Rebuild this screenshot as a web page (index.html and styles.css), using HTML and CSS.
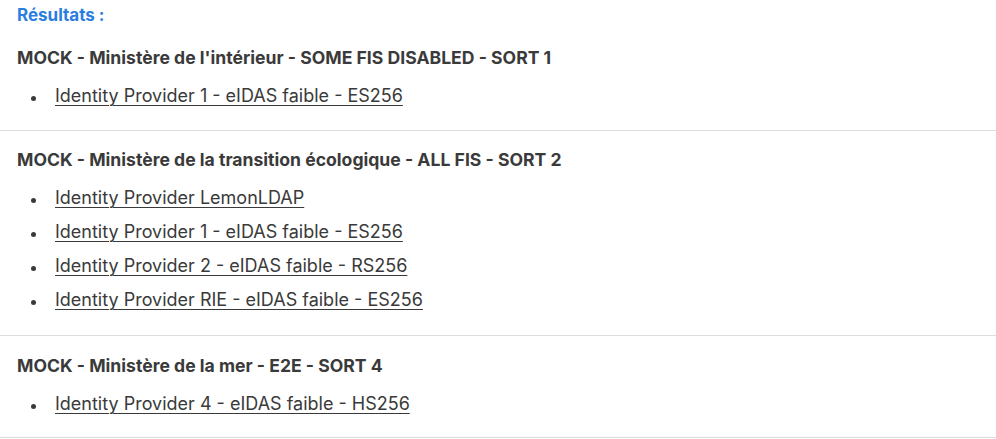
FILE: index.html
```html
<!DOCTYPE html>
<html lang="fr">
<head>
<meta charset="utf-8">
<link rel="stylesheet" href="styles.css">
</head>
<body>
<p class="title">Résultats :</p>
<section class="group">
  <h3 class="group-name">MOCK - Ministère de l'intérieur - SOME FIS DISABLED - SORT 1</h3>
  <ul class="list">
    <li><a href="#">Identity Provider 1 - eIDAS faible - ES256</a></li>
  </ul>
</section>
<section class="group group-wide">
  <h3 class="group-name">MOCK - Ministère de la transition écologique - ALL FIS - SORT 2</h3>
  <ul class="list">
    <li><a href="#">Identity Provider LemonLDAP</a></li>
    <li><a href="#">Identity Provider 1 - eIDAS faible - ES256</a></li>
    <li><a href="#">Identity Provider 2 - eIDAS faible - RS256</a></li>
    <li><a href="#">Identity Provider RIE - eIDAS faible - ES256</a></li>
  </ul>
</section>
<section class="group group-last">
  <h3 class="group-name">MOCK - Ministère de la mer - E2E - SORT 4</h3>
  <ul class="list">
    <li><a href="#">Identity Provider 4 - eIDAS faible - HS256</a></li>
  </ul>
</section>
</body>
</html>
```
FILE: styles.css
```css
html, body {
  margin: 0;
  padding: 0;
  background: #fff;
}
body {
  font-family: Inter, "Noto Sans", sans-serif;
  color: #3a3a3a;
  font-size: 18px;
}
.title {
  margin: 0;
  padding: 3px 17px 0;
  height: 26px;
  line-height: 24px;
  color: #2a7de1;
  font-weight: 700;
  font-size: 17px;
}
.group {
  border-bottom: 1px solid #dddddd;
  padding: 16px 17px 17px;
}
.group-wide {
  padding-bottom: 18px;
}
.group-last {
  padding-top: 17px;
  padding-bottom: 16px;
}
.group-name {
  margin: 0;
  font-size: 17.6px;
  font-weight: 700;
  line-height: 26px;
  color: #3a3a3a;
}
.list {
  margin: 8px 0 0;
  padding: 0 0 0 14px;
  list-style: none;
}
.list li {
  display: flex;
  align-items: center;
  line-height: 26px;
  padding: 4px 0 4px;
}
.list li::before {
  content: "";
  width: 5px;
  height: 5px;
  border-radius: 50%;
  background: #3a3a3a;
  margin-right: 19px;
  margin-top: 4px;
  flex: none;
}
.list a {
  color: #3a3a3a;
  text-decoration: underline;
  text-decoration-thickness: 1px;
  text-underline-offset: 3px;
}
```
